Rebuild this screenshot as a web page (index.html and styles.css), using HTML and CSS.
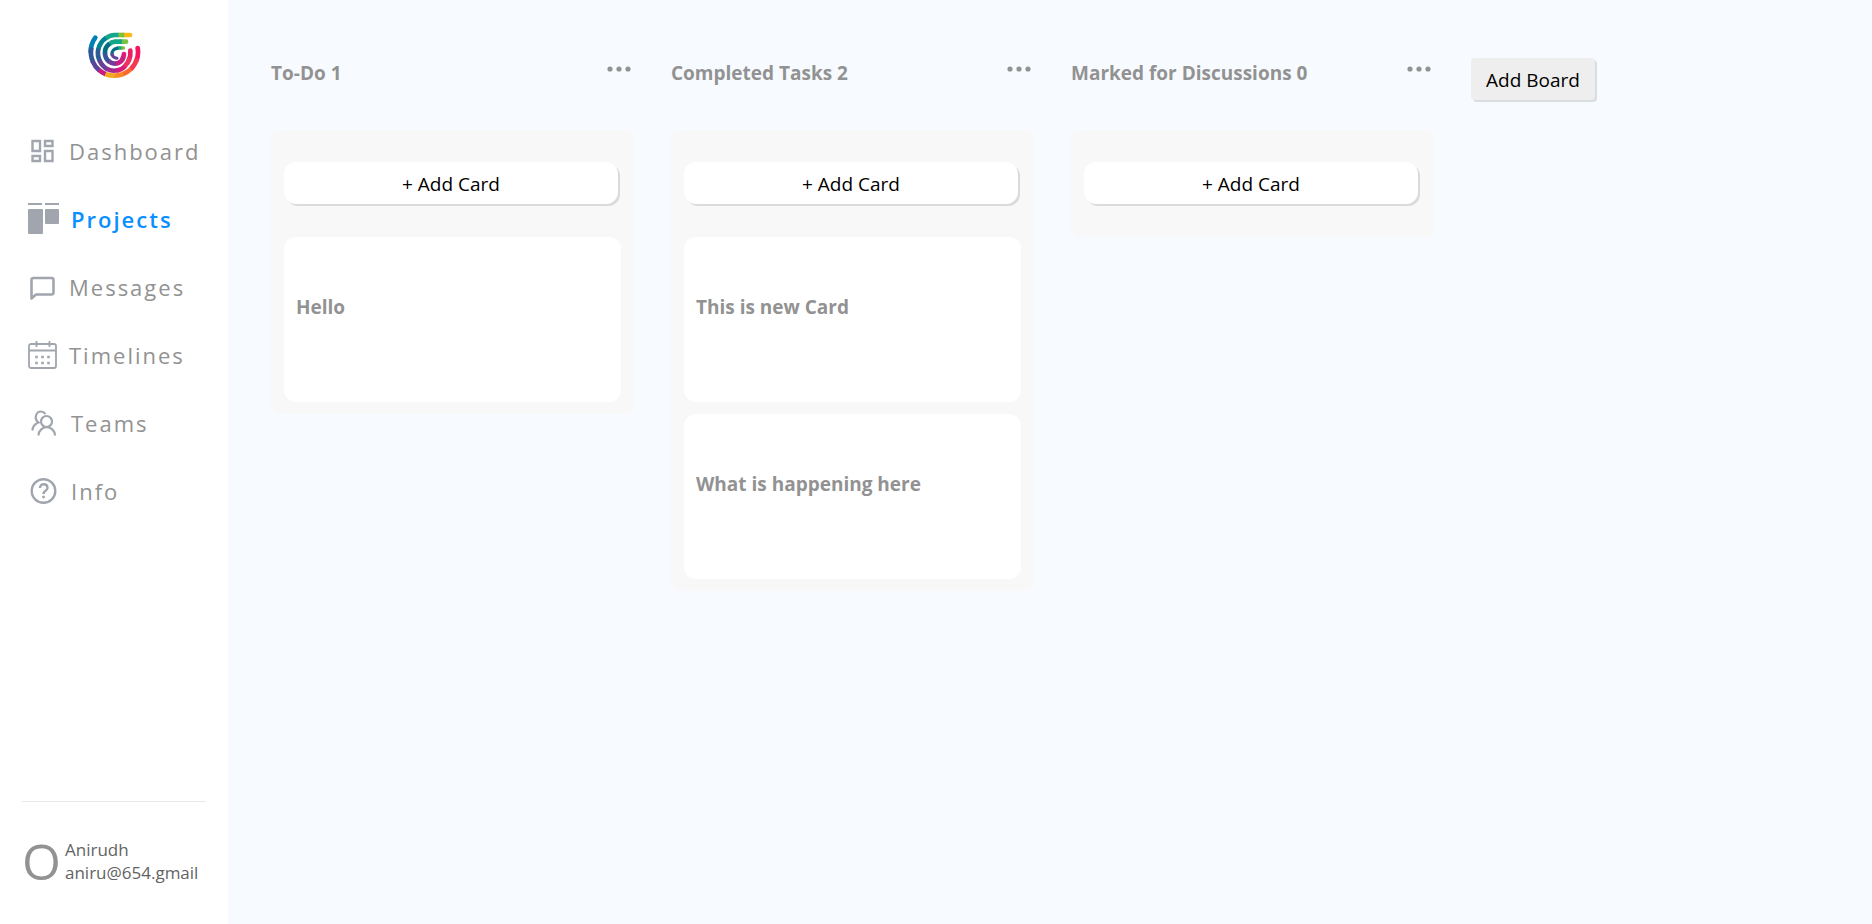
FILE: index.html
```html
<!DOCTYPE html>
<html lang="en">
<head>
<meta charset="utf-8">
<title>Projects</title>
<link rel="stylesheet" href="styles.css">
</head>
<body>
<div class="app">
  <aside class="sidebar">
    <svg class="logo" viewBox="50 35 162 144" fill="none" stroke-width="14" stroke-linecap="round" aria-label="Logo">
      <path stroke="#0080b5" d="M75 55A71 71 0 0 0 61 98"/>
      <path stroke="#f5145f" d="M202 86A71 71 0 0 1 199 122"/>
      <g stroke-linecap="butt">
        <path stroke="#30579a" d="M63 85A71 71 0 0 0 68 128"/>
        <path stroke="#5b459b" d="M67 126A71 71 0 0 0 87 153"/>
        <path stroke="#c51a80" d="M86 152A71 71 0 0 0 107 165"/>
        <path stroke="#f6a81c" d="M105 164A71 71 0 0 0 133 169"/>
        <path stroke="#fb8a20" d="M132 169A71 71 0 0 0 159 164"/>
        <path stroke="#fb6a2c" d="M158 164A71 71 0 0 0 183 148"/>
        <path stroke="#f43950" d="M182 149A71 71 0 0 0 200 118"/>
      </g>
      <path stroke="#fdb913" d="M179 47H158"/>
      <path stroke="#e91e63" d="M180 94A49 53 0 0 1 176 122"/>
      <g stroke-linecap="butt">
        <path stroke="#7fbf3f" d="M162 47H142"/>
        <path stroke="#14a78b" d="M144 47H133A49 53 0 0 0 106 57"/>
        <path stroke="#00838f" d="M107 56A49 53 0 0 0 84 90"/>
        <path stroke="#2d5b96" d="M84 88A49 53 0 0 0 89 126"/>
        <path stroke="#6a3f98" d="M88 124A49 53 0 0 0 112 150"/>
        <path stroke="#a62a8d" d="M110 149A49 53 0 0 0 141 153"/>
        <path stroke="#d81b7a" d="M139 154A49 53 0 0 0 165 140"/>
        <path stroke="#ee3162" d="M163 141A49 53 0 0 0 178 115"/>
      </g>
      <path stroke="#7cc242" d="M167 67H152"/>
      <path stroke="#e5177b" d="M161 104A29 32 0 0 1 157 117"/>
      <g stroke-linecap="butt">
        <path stroke="#12a886" d="M155 67H134A29 32 0 0 0 116 75"/>
        <path stroke="#006d80" d="M118 73A29 32 0 0 0 104 103"/>
        <path stroke="#37549a" d="M104 100A29 32 0 0 0 117 127"/>
        <path stroke="#783b97" d="M115 126A29 32 0 0 0 139 132"/>
        <path stroke="#c71f84" d="M137 133A29 32 0 0 0 160 112"/>
      </g>
      <path stroke="#79bd43" stroke-width="11" d="M159 86H150"/>
      <path stroke="#12a886" stroke-width="11" d="M149 86H142"/>
      <path stroke="#00707f" stroke-width="10" d="M140 87A17 17 0 0 0 125 105"/>
      <path stroke="#64429a" stroke-width="9" d="M125 105Q128 116 140 117"/>
    </svg>
    <nav class="nav">
      <a class="nav-link" href="#">
        <svg class="icon" viewBox="0 0 32 32" fill="none" stroke="currentColor" stroke-width="2.4"><path d="M4.5 6H12V16H4.5zM17 6H24.500V11H17zM17 16H24.500V26H17zM4.500 21H12V26H4.500z"/></svg>
        Dashboard
      </a>
      <a class="nav-link wide active" href="#">
        <svg class="icon" viewBox="0 0 32 32" fill="currentColor"><path d="M0 0H14V2H0zM17 0H31V2H17z"/><rect y="6" width="15" height="25" rx="1"/><rect x="17" y="6" width="14" height="15" rx="1"/></svg>
        Projects
      </a>
      <a class="nav-link" href="#">
        <svg class="icon" viewBox="0 0 32 32" fill="none" stroke="currentColor" stroke-width="2.600" stroke-linejoin="round"><path d="M5.500 7H23.500Q25.500 7 25.500 9V21.500Q25.500 23.500 23.500 23.500H8L3.500 27.500V9Q3.500 7 5.500 7z"/></svg>
        Messages
      </a>
      <a class="nav-link" href="#">
        <svg class="icon" viewBox="0 0 32 32" fill="none" stroke="currentColor" stroke-width="1.800"><rect x="1" y="5" width="27" height="24" rx="2"/><path d="M1 11.500H28M8.500 2V8M21.500 2V8"/><path stroke-width="2.600" stroke-dasharray="2.600 3.400" d="M7.200 18H22M7.200 24H22"/></svg>
        Timelines
      </a>
      <a class="nav-link wide" href="#">
        <svg class="icon" viewBox="0 0 32 32" fill="none" stroke="currentColor" stroke-width="2.200"><circle cx="18.500" cy="14.500" r="5.500"/><path d="M10.500 28.500C11 17.500 26.500 17.500 27 28.500M4.500 23.500C4.500 20 6.500 17 10.500 15.500C5.500 11.500 8 4.500 13 4.500Q15.500 4.500 17.500 7"/></svg>
        Teams
      </a>
      <a class="nav-link wide" href="#">
        <svg class="icon" viewBox="0 0 32 32" fill="none" stroke="currentColor" stroke-width="2.400"><circle cx="15.500" cy="16" r="11.800"/><path d="M12 13C12 8 19.500 8 19.500 13C19.500 15.500 15.500 15.500 15.500 19"/><circle cx="15.500" cy="22" r="1" fill="currentColor" stroke-width="1"/></svg>
        Info
      </a>
    </nav>
    <footer class="profile">
      <div class="avatar">O</div>
      <div class="profile-text"><div>Anirudh</div><div>aniru@654.gmail</div></div>
    </footer>
  </aside>
  <main class="boards">
    <section class="board">
      <header class="board-head"><h2>To-Do 1</h2>
        <button class="more" type="button" aria-label="Board options"><svg viewBox="0 0 24 6" fill="currentColor"><circle cx="3" cy="3" r="2.600"/><circle cx="12" cy="3" r="2.600"/><circle cx="21" cy="3" r="2.600"/></svg></button></header>
      <div class="panel">
        <button class="add-card" type="button">+ Add Card</button>
        <article class="card"><h3>Hello</h3></article>
      </div>
    </section>
    <section class="board">
      <header class="board-head"><h2>Completed Tasks 2</h2>
        <button class="more" type="button" aria-label="Board options"><svg viewBox="0 0 24 6" fill="currentColor"><circle cx="3" cy="3" r="2.600"/><circle cx="12" cy="3" r="2.600"/><circle cx="21" cy="3" r="2.600"/></svg></button></header>
      <div class="panel">
        <button class="add-card" type="button">+ Add Card</button>
        <article class="card"><h3>This is new Card</h3></article>
        <article class="card"><h3>What is happening here</h3></article>
      </div>
    </section>
    <section class="board">
      <header class="board-head"><h2>Marked for Discussions 0</h2>
        <button class="more" type="button" aria-label="Board options"><svg viewBox="0 0 24 6" fill="currentColor"><circle cx="3" cy="3" r="2.600"/><circle cx="12" cy="3" r="2.600"/><circle cx="21" cy="3" r="2.600"/></svg></button></header>
      <div class="panel">
        <button class="add-card" type="button">+ Add Card</button>
      </div>
    </section>
    <button class="add-board" type="button">Add Board</button>
  </main>
</div>
</body>
</html>
```
FILE: styles.css
```css
* { box-sizing: border-box; }
body { margin: 0; font-family: "Open Sans", "Noto Sans", sans-serif; color: #929292; }
h2, h3 { margin: 0; font-size: 19px; line-height: 26px; font-weight: 700; }
button { font: inherit; color: #000; border: 0; cursor: pointer; }

.app { display: flex; min-height: 100vh; background: #f7fbff; }

.sidebar { width: 228px; flex: none; display: flex; flex-direction: column; background: #fff; }
.logo { width: 54px; height: 48px; margin: 31px auto 0 87px; }
.nav { display: flex; flex-direction: column; gap: 36px; margin-top: 56px; padding-left: 28px; }
.nav-link { display: flex; align-items: center; gap: 9px; height: 32px; font-size: 22px; letter-spacing: 2px; color: #929292; text-decoration: none; }
.nav-link.wide { gap: 11px; }
.nav-link.active { color: #0a8fff; font-weight: 600; }
.icon { width: 32px; height: 32px; flex: none; color: #a1a6ae; }
.profile { display: flex; align-items: center; gap: 6px; margin: auto 22px 0; padding: 36px 0 40px; border-top: 1px solid #e8e8e8; color: #636363; font-size: 17px; line-height: 23px; white-space: nowrap; }
.avatar { width: 37px; flex: none; font-size: 50px; line-height: 46px; text-align: center; color: #929292; }

.boards { flex: 1; display: flex; align-items: flex-start; gap: 37px; padding: 58px 43px; }
.board { width: 363px; }
.board-head { display: flex; justify-content: space-between; align-items: flex-start; height: 72px; padding: 2px 3px 0 0; }
.more { display: flex; align-items: center; height: 18px; padding: 0; background: none; color: #929292; }
.more svg { width: 24px; height: 6px; }
.panel { display: flex; flex-direction: column; gap: 12px; padding: 32px 13px 12px; border-radius: 8px; background: #f8f8f8; }
.add-card { height: 42px; margin: 0 3px 21px 0; padding: 2px 0 0; border-radius: 12px; background: #fff; box-shadow: 2px 2px #dadada; font-size: 19px; }
.card { display: flex; align-items: center; height: 165px; padding: 0 12px 26px; border-radius: 12px; background: #fff; }
.add-board { height: 42px; padding: 2px 15px 0; border-radius: 4px; background: #eee; box-shadow: 2px 2px #d9dde0; font-size: 19px; }
```
